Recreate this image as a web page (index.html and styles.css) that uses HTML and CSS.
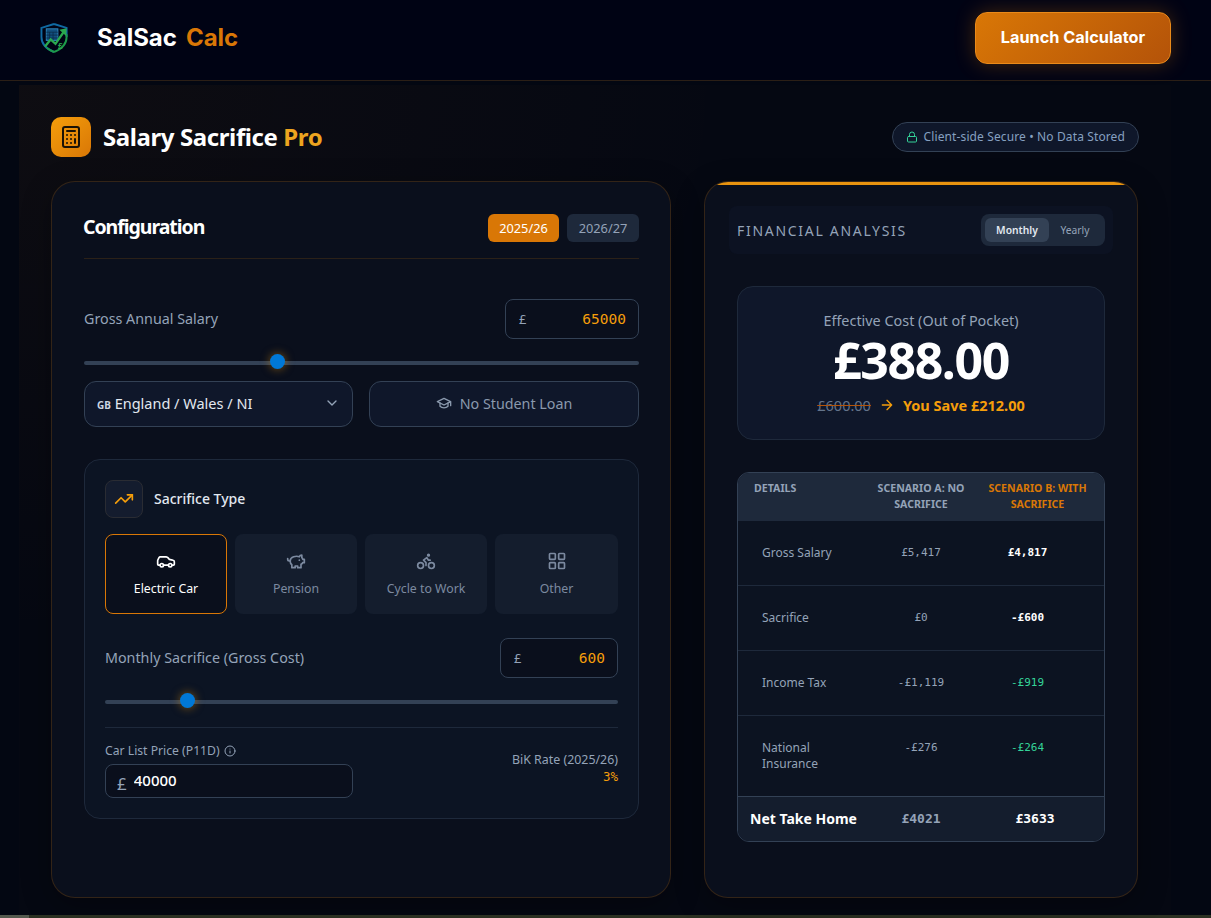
FILE: index.html
```html
<!DOCTYPE html>
<html lang="en">
<head>
  <meta charset="UTF-8">
  <meta name="viewport" content="width=device-width, initial-scale=1.0">
  <title>SalSac Calc</title>
  <link rel="stylesheet" href="styles.css">
</head>
<body>
  <header class="topbar">
    <div class="brand">
      <svg class="brand-logo" viewBox="0 0 30 32" fill="none">
        <path d="M14.500 1.500 27.500 5.500V15M14.500 30.500C7 27.500 1.500 23 1.500 15V5.500L14.500 1.500" stroke="#0f6aa3" stroke-width="2"/>
        <rect x="6.500" y="6.500" width="12" height="12" fill="#124f7e" stroke="#2f86bd" stroke-width="1"/>
        <path d="M6.500 10h12M6.500 13h12M6.500 16h12M10 10v8.500M13.500 10v8.500" stroke="#0a2a48" stroke-width="0.800"/>
        <path d="M14.500 30.500C11.500 29.300 9 27.800 7 26" stroke="#1d9a4a" stroke-width="2"/>
        <path d="M27.500 12V15c0 7-5 12.500-13 15.500" stroke="#1d9a4a" stroke-width="2"/>
        <path d="M5 25 11 17.500l5 4.500 9-13" stroke="#2aa84f" stroke-width="2.400"/>
        <path d="M20 7.500l7.500-1.500-.5 8z" fill="#2aa84f"/>
        <text x="18.500" y="27" class="brand-logo-pound">£</text>
      </svg>
      <span class="brand-name">SalSac<span class="brand-accent">Calc</span></span>
    </div>
    <button class="launch-btn">Launch Calculator</button>
  </header>

  <main class="page">
    <div class="page-head">
      <div class="page-title">
        <div class="title-icon">
          <svg viewBox="0 0 24 24" fill="none" stroke="#1a1206" stroke-width="2" stroke-linecap="round" stroke-linejoin="round">
            <rect x="4" y="2" width="16" height="20" rx="2"/>
            <path d="M8 6h8M16 14v4M16 10h.01M12 10h.01M8 10h.01M12 14h.01M8 14h.01M12 18h.01M8 18h.01"/>
          </svg>
        </div>
        <h1>Salary Sacrifice <span class="title-accent">Pro</span></h1>
      </div>
      <div class="secure-pill">
        <svg viewBox="0 0 24 24" fill="none" stroke="#34d399" stroke-width="2" stroke-linecap="round" stroke-linejoin="round">
          <rect x="3" y="11" width="18" height="11" rx="2"/>
          <path d="M7 11V7a5 5 0 0 1 10 0v4"/>
        </svg>
        Client-side Secure • No Data Stored
      </div>
    </div>

    <div class="columns">
      <section class="card config">
        <div class="config-head">
          <h2>Configuration</h2>
          <div class="years">
            <button class="year active">2025/26</button>
            <button class="year">2026/27</button>
          </div>
        </div>

        <div class="field-row salary-row">
          <label class="field-label">Gross Annual Salary</label>
          <div class="money-input">
            <span>£</span>
            <input type="text" value="65000">
          </div>
        </div>
        <input class="slider" type="range" min="0" max="100" value="34.500" step="0.500">

        <div class="choice-row">
          <div class="select-box">
            <span><span class="flag">GB</span> England / Wales / NI</span>
            <svg viewBox="0 0 24 24" fill="none" stroke="#94a3b8" stroke-width="2" stroke-linecap="round" stroke-linejoin="round"><path d="m6 9 6 6 6-6"/></svg>
          </div>
          <button class="loan-btn">
            <svg viewBox="0 0 24 24" fill="none" stroke="currentColor" stroke-width="2" stroke-linecap="round" stroke-linejoin="round"><path d="M22 10v6M2 10l10-5 10 5-10 5z"/><path d="M6 12v5c3 3 9 3 12 0v-5"/></svg>
            No Student Loan
          </button>
        </div>

        <div class="panel">
          <div class="panel-head">
            <div class="panel-icon">
              <svg viewBox="0 0 24 24" fill="none" stroke="#f59e0b" stroke-width="2" stroke-linecap="round" stroke-linejoin="round"><path d="M22 7l-8.500 8.500-5-5L2 17"/><path d="M16 7h6v6"/></svg>
            </div>
            <h3>Sacrifice Type</h3>
          </div>

          <div class="options">
            <div class="option active">
              <svg viewBox="0 0 24 24" fill="none" stroke="currentColor" stroke-width="2" stroke-linecap="round" stroke-linejoin="round"><path d="M19 17h2c.6 0 1-.4 1-1v-3c0-.9-.7-1.700-1.500-1.900C18.700 10.600 16 10 16 10s-1.300-1.400-2.200-2.300c-.5-.4-1.100-.7-1.800-.7H5c-.6 0-1.100.4-1.400.9l-1.400 2.900A3.700 3.700 0 0 0 2 12v4c0 .6.4 1 1 1h2"/><circle cx="7" cy="17" r="2"/><path d="M9 17h6"/><circle cx="17" cy="17" r="2"/></svg>
              Electric Car
            </div>
            <div class="option">
              <svg viewBox="0 0 24 24" fill="none" stroke="currentColor" stroke-width="2" stroke-linecap="round" stroke-linejoin="round"><path d="M19 5c-1.500 0-2.800 1.400-3 2-3.500-1.500-11-.3-11 5 0 1.800 0 3 2 4.500V20h4v-2h3v2h4v-4c1-.5 1.700-1 2-2h2v-4h-2c0-1-.5-1.500-1-2z"/><path d="M2 9v1c0 1.100.9 2 2 2h1"/><path d="M16 11h.01"/></svg>
              Pension
            </div>
            <div class="option">
              <svg viewBox="0 0 24 24" fill="none" stroke="currentColor" stroke-width="2" stroke-linecap="round" stroke-linejoin="round"><circle cx="18.500" cy="17.500" r="3.500"/><circle cx="5.500" cy="17.500" r="3.500"/><circle cx="15" cy="5" r="1"/><path d="M12 17.500V14l-3-3 4-3 2 3h2"/></svg>
              Cycle to Work
            </div>
            <div class="option">
              <svg viewBox="0 0 24 24" fill="none" stroke="currentColor" stroke-width="2" stroke-linecap="round" stroke-linejoin="round"><rect x="3" y="3" width="7" height="7" rx="1"/><rect x="14" y="3" width="7" height="7" rx="1"/><rect x="14" y="14" width="7" height="7" rx="1"/><rect x="3" y="14" width="7" height="7" rx="1"/></svg>
              Other
            </div>
          </div>

          <div class="field-row monthly-row">
            <label class="field-label">Monthly Sacrifice (Gross Cost)</label>
            <div class="money-input small">
              <span>£</span>
              <input type="text" value="600">
            </div>
          </div>
          <input class="slider" type="range" min="0" max="100" value="15">

          <div class="car-row">
            <div class="car-price">
              <label>Car List Price (P11D)
                <svg viewBox="0 0 24 24" fill="none" stroke="currentColor" stroke-width="2" stroke-linecap="round" stroke-linejoin="round"><circle cx="12" cy="12" r="10"/><path d="M12 16v-4M12 8h.01"/></svg>
              </label>
              <div class="price-input">
                <span>£</span>
                <input type="text" value="40000">
              </div>
            </div>
            <div class="bik">
              <div class="bik-label">BiK Rate (2025/26)</div>
              <div class="bik-value">3%</div>
            </div>
          </div>
        </div>
      </section>

      <section class="card results">
        <div class="results-bar"></div>
        <div class="results-head">
          <h2>FINANCIAL ANALYSIS</h2>
          <div class="toggle">
            <button class="toggle-btn active">Monthly</button>
            <button class="toggle-btn">Yearly</button>
          </div>
        </div>

        <div class="hero">
          <div class="hero-label">Effective Cost (Out of Pocket)</div>
          <div class="hero-value">£388.00</div>
          <div class="hero-save">
            <s>£600.00</s>
            <svg viewBox="0 0 24 24" fill="none" stroke="#f59e0b" stroke-width="2" stroke-linecap="round" stroke-linejoin="round"><path d="M5 12h14M12 5l7 7-7 7"/></svg>
            <strong>You Save £212.00</strong>
          </div>
        </div>

        <div class="table-wrap">
          <table class="compare">
            <colgroup>
              <col class="col-name">
              <col class="col-a">
              <col class="col-b">
            </colgroup>
            <thead>
              <tr>
                <th>DETAILS</th>
                <th>SCENARIO A: NO SACRIFICE</th>
                <th class="th-b">SCENARIO B: WITH SACRIFICE</th>
              </tr>
            </thead>
            <tbody>
              <tr>
                <td>Gross Salary</td>
                <td>£5,417</td>
                <td class="val-white">£4,817</td>
              </tr>
              <tr>
                <td>Sacrifice</td>
                <td>£0</td>
                <td class="val-white">-£600</td>
              </tr>
              <tr>
                <td>Income Tax</td>
                <td>-£1,119</td>
                <td class="val-green">-£919</td>
              </tr>
              <tr class="row-tall">
                <td>National Insurance</td>
                <td>-£276</td>
                <td class="val-green">-£264</td>
              </tr>
            </tbody>
            <tfoot>
              <tr>
                <td>Net Take Home</td>
                <td>£4021</td>
                <td>£3633</td>
              </tr>
            </tfoot>
          </table>
        </div>
      </section>
    </div>
  </main>
  <div class="bottom-strip"></div>
</body>
</html>
```

FILE: styles.css
```css
* {
  box-sizing: border-box;
}

body {
  margin: 0;
  height: 100vh;
  overflow: hidden;
  display: flex;
  flex-direction: column;
  font-family: "Noto Sans", "Open Sans", sans-serif;
  background-color: #030712;
  color: #e2e8f0;
}

h1, h2, h3 {
  margin: 0;
}

button {
  font-family: inherit;
  cursor: pointer;
}

input {
  font-family: inherit;
  border: none;
  background: none;
  outline: none;
}

/* top bar */
.topbar {
  height: 81px;
  flex-shrink: 0;
  display: flex;
  justify-content: space-between;
  align-items: center;
  padding: 0 40px 4px 40px;
  background-color: #000314;
  border-bottom: 1px solid #2b1f16;
}

.brand {
  display: flex;
  align-items: center;
  gap: 28px;
}

.brand-logo {
  width: 29px;
  height: 32px;
}

.brand-logo-pound {
  font-family: "Liberation Sans", sans-serif;
  font-size: 9px;
  font-weight: 700;
  fill: #2aa84f;
}

.brand-name {
  padding-bottom: 2px;
  font-family: Inter, sans-serif;
  font-weight: 700;
  font-size: 24px;
  color: #fff;
}

.brand-accent {
  color: #d97706;
  margin-left: 9px;
}

.launch-btn {
  width: 196px;
  height: 52px;
  padding: 0 0 2px;
  font-family: Inter, sans-serif;
  font-size: 16.300px;
  font-weight: 700;
  color: #fff;
  background: linear-gradient(135deg, #d97706, #b45309);
  border: 1px solid #ea8a1a;
  border-radius: 12px;
  box-shadow: 0 0 20px rgba(217, 119, 6, 0.3);
}

/* page */
.page {
  flex: 1;
  min-height: 0;
  width: 1152px;
  margin: 4px 0 0 19px;
  padding: 32px 32px 17px;
  display: flex;
  flex-direction: column;
  background:
    radial-gradient(900px 700px at 0 0, rgba(217, 119, 6, 0.045), transparent 80%),
    #050812;
}

.page-head {
  display: flex;
  justify-content: space-between;
  align-items: center;
  margin-bottom: 24px;
}

.page-title {
  display: flex;
  align-items: center;
  gap: 12px;
}

.title-icon {
  width: 40px;
  height: 40px;
  border-radius: 10px;
  background: linear-gradient(135deg, #f59e0b, #d97706);
  display: flex;
  align-items: center;
  justify-content: center;
}

.title-icon svg {
  width: 24px;
  height: 24px;
}

.page-title h1 {
  padding-bottom: 2px;
  font-size: 24px;
  font-weight: 700;
  letter-spacing: -0.400px;
  color: #fff;
}

.title-accent {
  color: #eda41f;
}

.secure-pill {
  height: 30px;
  padding: 0 13px 1px;
  display: flex;
  align-items: center;
  gap: 6px;
  font-size: 12px;
  letter-spacing: 0.120px;
  color: #86a0c0;
  background-color: #0f172a;
  border: 1px solid #334155;
  border-radius: 15px;
}

.secure-pill svg {
  width: 12px;
  height: 12px;
}

.columns {
  flex: 1;
  min-height: 0;
  display: grid;
  grid-template-columns: 620px 434px;
  gap: 33px;
}

.card {
  border-radius: 24px;
  border: 1px solid rgba(217, 119, 6, 0.2);
  background-color: #0a0f1c;
  box-shadow: 0 8px 30px rgba(0, 0, 0, 0.3);
}

/* configuration */
.config {
  padding: 32px 31px 32px 32px;
}

.config-head {
  display: flex;
  justify-content: space-between;
  align-items: center;
  padding-bottom: 16px;
  border-bottom: 1px solid #2b2118;
}

.config-head h2 {
  margin-left: -1px;
  font-size: 19.500px;
  line-height: 24px;
  padding-bottom: 2px;
  font-weight: 700;
  letter-spacing: -1.050px;
  color: #fff;
}

.years {
  display: flex;
  gap: 8px;
}

.year {
  width: 72px;
  height: 28px;
  padding: 0;
  font-size: 12.800px;
  color: #94a3b8;
  background-color: #1e293b;
  border: none;
  border-radius: 6px;
}

.year.active {
  width: 71px;
  background-color: #d97706;
  color: #fff;
}

.field-row {
  display: flex;
  justify-content: space-between;
  align-items: center;
}

.salary-row {
  margin-top: 40px;
}

.field-label {
  padding-bottom: 2px;
  font-size: 14.300px;
  color: #94a3b8;
}

.money-input {
  width: 134px;
  height: 40px;
  padding: 0 12px 0 13px;
  display: flex;
  align-items: center;
  justify-content: space-between;
  background-color: #0a0f1c;
  border: 1px solid #334155;
  border-radius: 8px;
  font-size: 13px;
  color: #94a3b8;
}

.money-input.small {
  width: 118px;
}

.money-input input {
  width: 70px;
  text-align: right;
  font-family: "DejaVu Sans Mono", monospace;
  font-size: 14.500px;
  color: #f59e0b;
  padding: 0;
}

.slider {
  -webkit-appearance: none;
  appearance: none;
  display: block;
  width: 100%;
  height: 16px;
  margin: 16px 0 10px;
  background: none;
}

.slider::-webkit-slider-runnable-track {
  height: 4px;
  border-radius: 2px;
  background-color: #334155;
}

.slider::-webkit-slider-thumb {
  -webkit-appearance: none;
  width: 15px;
  height: 15px;
  margin-top: -7px;
  border-radius: 50%;
  background-color: #0078d7;
  box-shadow: 0 0 10px rgba(245, 158, 11, 0.5);
}

.choice-row {
  display: grid;
  grid-template-columns: 269px 270px;
  gap: 16px;
}

.select-box {
  height: 46px;
  padding: 0 12px 2px;
  display: flex;
  justify-content: space-between;
  align-items: center;
  font-size: 14.500px;
  color: #e2e8f0;
  background-color: #0f172a;
  border: 1px solid #334155;
  border-radius: 12px;
}

.select-box svg {
  width: 16px;
  height: 16px;
}

.flag {
  font-size: 10px;
  font-weight: 700;
  color: #cbd5e1;
}

.loan-btn {
  height: 46px;
  padding: 0 0 2px;
  display: flex;
  align-items: center;
  justify-content: center;
  gap: 8px;
  font-size: 14.300px;
  color: #8a99ad;
  background-color: #0f172a;
  border: 1px solid #334155;
  border-radius: 12px;
}

.loan-btn svg {
  width: 16px;
  height: 16px;
}

/* sacrifice panel */
.panel {
  margin-top: 32px;
  height: 360px;
  padding: 20px;
  background-color: #0c1423;
  border: 1px solid #1e293b;
  border-radius: 16px;
}

.panel-head {
  display: flex;
  align-items: center;
  gap: 11px;
  margin-bottom: 16px;
}

.panel-icon {
  width: 38px;
  height: 38px;
  display: flex;
  align-items: center;
  justify-content: center;
  background-color: #141c2e;
  border: 1px solid #2a2c33;
  border-radius: 8px;
}

.panel-icon svg {
  width: 20px;
  height: 20px;
}

.panel-head h3 {
  padding-bottom: 2px;
  font-size: 14px;
  font-weight: 500;
  color: #e2e8f0;
}

.options {
  display: grid;
  grid-template-columns: 122px 122px 122px 1fr;
  gap: 8px;
}

.option {
  height: 80px;
  display: flex;
  flex-direction: column;
  align-items: center;
  justify-content: center;
  gap: 9px;
  font-size: 12.300px;
  color: #7c8aa0;
  background-color: #141d2d;
  border: 1px solid transparent;
  border-radius: 8px;
}

.option svg {
  width: 20px;
  height: 20px;
}

.option.active {
  color: #fff;
  background-color: #0a0f1c;
  border-color: #d97706;
}

.monthly-row {
  margin-top: 24px;
}

.panel .slider {
  margin: 16px 0 0;
}

.car-row {
  margin-top: 17px;
  padding-top: 15px;
  display: flex;
  justify-content: space-between;
  align-items: flex-start;
  border-top: 1px solid #1e293b;
}

.car-price label {
  display: flex;
  align-items: center;
  gap: 4px;
  margin-bottom: 5px;
  font-size: 12.200px;
  line-height: 16px;
  color: #94a3b8;
}

.car-price label svg {
  width: 12px;
  height: 12px;
}

.price-input {
  width: 248px;
  height: 34px;
  padding: 0 11px;
  display: flex;
  align-items: center;
  gap: 7px;
  background-color: #0a0f1c;
  border: 1px solid #334155;
  border-radius: 8px;
  color: #94a3b8;
  font-size: 17px;
}

.price-input span {
  padding-top: 4px;
}

.price-input input {
  width: 120px;
  padding: 0 0 2px;
  font-size: 15px;
  font-weight: 500;
  color: #fff;
}

.bik {
  margin-top: 8px;
  text-align: right;
  font-size: 12.400px;
  line-height: 17px;
  color: #94a3b8;
}

.bik-value {
  margin-top: 1px;
  font-family: "DejaVu Sans Mono", monospace;
  font-size: 12.500px;
  line-height: 16px;
  color: #f59e0b;
}

/* results */
.results {
  position: relative;
  overflow: hidden;
  padding: 24px 32px;
}

.results-bar {
  position: absolute;
  top: -1px;
  left: 0;
  right: 0;
  height: 4px;
  background-color: #e8930f;
}

.results-head {
  margin: 0 -8px 32px;
  padding: 8px;
  display: flex;
  justify-content: space-between;
  align-items: center;
  background-color: #0c1222;
  border-radius: 8px;
}

.results-head h2 {
  font-size: 14px;
  font-weight: 400;
  letter-spacing: 1.700px;
  color: #94a3b8;
}

.toggle {
  width: 124px;
  height: 32px;
  padding: 4px;
  display: flex;
  background-color: #1e293b;
  border-radius: 8px;
}

.toggle-btn {
  flex: 1;
  padding: 0;
  font-size: 10.300px;
  color: #94a3b8;
  background: none;
  border: none;
  border-radius: 6px;
}

.toggle-btn.active {
  flex: 0 0 64px;
  font-weight: 600;
  color: #e2e8f0;
  background-color: #334155;
}

.hero {
  height: 154px;
  padding-top: 24px;
  text-align: center;
  background-color: #0f172a;
  border: 1px solid #1e293b;
  border-radius: 16px;
}

.hero-label {
  font-size: 14.400px;
  line-height: 19px;
  color: #94a3b8;
}

.hero-value {
  margin-top: 2px;
  font-size: 50px;
  line-height: 56px;
  font-weight: 700;
  letter-spacing: -1.400px;
  color: #fff;
}

.hero-save {
  margin-top: 7px;
  display: flex;
  align-items: center;
  justify-content: center;
  gap: 8px;
  font-size: 14.500px;
}

.hero-save s {
  color: #64748b;
  text-decoration-color: #b45309;
}

.hero-save svg {
  width: 16px;
  height: 16px;
}

.hero-save strong {
  font-weight: 700;
  color: #f59e0b;
}

.table-wrap {
  margin-top: 32px;
  overflow: hidden;
  border: 1px solid #334155;
  border-radius: 12px;
}

.compare {
  width: 100%;
  table-layout: fixed;
  border-collapse: collapse;
}

.col-name {
  width: 129px;
}

.col-a {
  width: 108px;
}

.compare th {
  height: 47px;
  padding: 7px 10px;
  vertical-align: top;
  font-size: 10.600px;
  line-height: 16px;
  font-weight: 700;
  color: #94a3b8;
  background-color: #1e293b;
}

.compare th:first-child {
  padding-left: 16px;
  text-align: left;
}

.compare th.th-b {
  padding-right: 14px;
  color: #d97706;
}

.compare tbody td {
  height: 65px;
  padding: 24px 0;
  vertical-align: top;
  text-align: center;
  font-family: "DejaVu Sans Mono", monospace;
  font-size: 11px;
  line-height: 16px;
  color: #94a3b8;
  background-color: #0c1321;
  border-top: 1px solid #1e293b;
}

.compare tbody td:first-child {
  padding-left: 24px;
  text-align: left;
  font-family: "Noto Sans", sans-serif;
  font-size: 12px;
}

.compare tbody td:last-child {
  padding-right: 24px;
}

.compare .row-tall td {
  height: 81px;
}

.compare .val-white {
  color: #fff;
  font-weight: 700;
}

.compare .val-green {
  color: #34d399;
}

.compare tfoot td {
  height: 45px;
  text-align: center;
  font-family: "DejaVu Sans Mono", monospace;
  font-size: 13px;
  font-weight: 700;
  color: #94a3b8;
  background-color: #141d2d;
  border-top: 1px solid #334155;
}

.compare tfoot td:first-child {
  padding-left: 12px;
  text-align: left;
  font-family: "Noto Sans", sans-serif;
  font-size: 14px;
  color: #fff;
}

.compare tfoot td:last-child {
  padding-right: 10px;
  color: #fff;
}

.bottom-strip {
  height: 3px;
  flex-shrink: 0;
  background: linear-gradient(90deg, #555a4e 29px, #2c3122 29px);
}
```
